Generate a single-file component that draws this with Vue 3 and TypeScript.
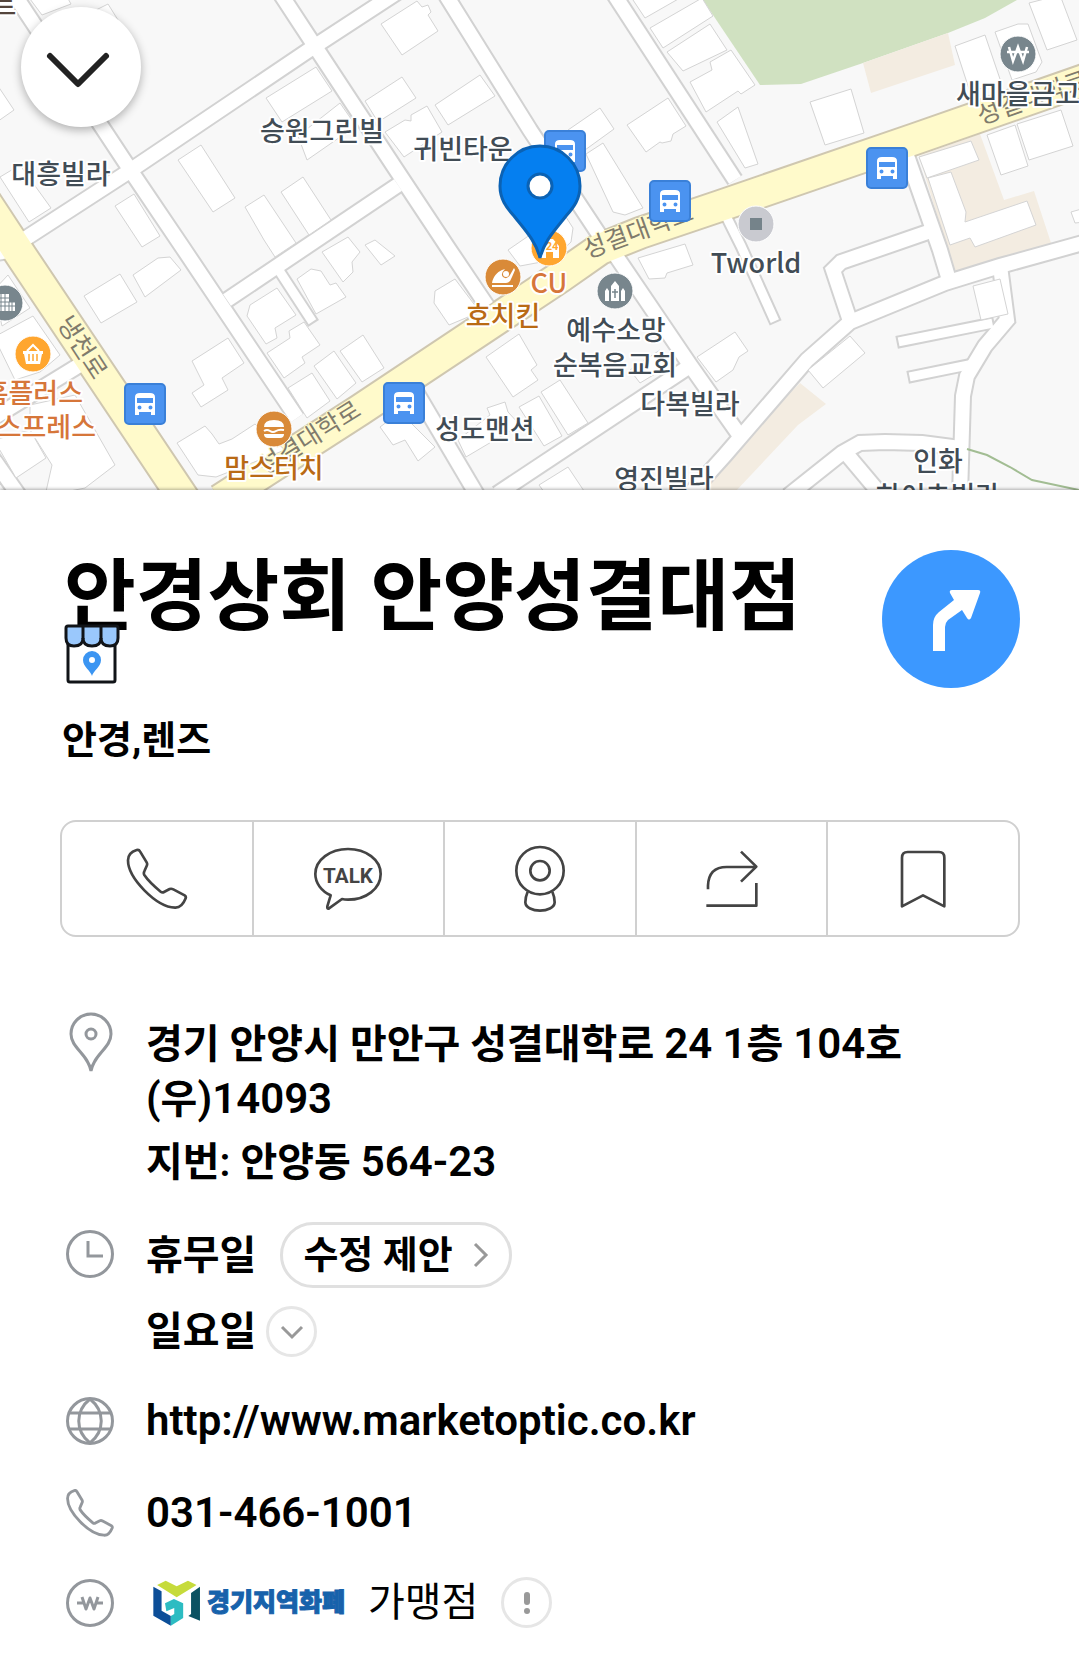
<script setup lang="ts">
interface MapLabel { text: string; x: number; y: number; tone?: string; anchor?: 'start' | 'middle' | 'end' }
interface RoadLabel { text: string; x: number; y: number; angle: number }
interface Poi { x: number; y: number; kind: string; color: string }

// White streets, as centre lines
const roads: string[] = [
  '20,242 125,174 312,48 410,-16',
  '14,-6 100,124 135,177 183,248 297,418',
  '278,-10 320,54 395,168 448,248 487,306',
  '444,-8 530,130 600,236',
  '610,-12 735,180',
  '398,185 227,300',
  '905,150 940,250 949,280',
  '928,232 841,262 833,270 849,318',
  '1090,241 1000,266 945,283 850,322 807,360 725,455 690,494',
  '1000,266 1007,320 985,346 967,376 963,396 960,496',
  '960,448 922,443 885,442 860,443 842,453 788,496',
  '845,452 882,496',
  '497,494 690,366',
  '612,250 690,365 740,436',
  '415,390 480,500',
  '78,366 -10,420',
  '-10,254 14,250',
  '-20,440 22,500',
]
const lanes: string[] = ['722,208 741,246 773,317', '280,272 310,318', '988,324 903,341', '968,365 914,376']
const avenues: string[] = [
  '-30,178 22,257 186,502',
  '220,500 360,410 560,277 600,249 640,233 720,206 915,139 1090,78',
]
const buildings: string[] = [
  '266,98 316,67 332,91 282,122', '298,136 340,103 356,126 307,160', '178,160 201,145 235,198 213,212',
  '245,207 264,195 296,243 275,257 264,240', '281,192 303,177 331,220 309,235', '115,206 134,194 160,236 142,247',
  '0,177 20,165 51,208 29,222', '-6,80 14,110 -6,124', '27,-5 42,15 71,4 66,-5', '96,10 108,4 118,20 105,25',
  '381,24 417,1 422,7 428,5 431,12 428,15 438,31 402,55', '365,101 402,77 416,98 378,122',
  '435,105 480,75 495,96 448,125', '385,132 405,120 411,121 411,115 427,106 442,132 404,157',
  '568,130 600,108 614,129 585,150', '586,154 603,143 643,208 625,215 613,212',
  '627,125 668,98 686,126 673,134 671,141 662,143 660,142 646,152', '629,-6 645,18 687,-6',
  '650,28 702,-2 713,16 663,48', '667,52 710,24 727,50 683,71',
  '690,82 712,70 710,62 731,50 755,85 741,94 738,91 706,112', '717,122 738,107 758,164 745,168',
  '810,102 851,89 864,133 825,145', '955,46 985,35 1001,82 970,92', '995,32 1018,24 1028,24 1042,62 1036,72 1012,80',
  '1029,3 1060,-5 1077,40 1047,50', '987,135 1015,125 1028,166 1001,175', '1017,124 1061,110 1073,146 1029,160',
  '919,157 971,141 979,160 927,178', '928,178 951,172 966,212 965,222 1027,201 1036,225 975,247 970,238 950,245',
  '1071,212 1085,208 1085,222 1075,223', '84,296 120,274 137,302 101,323', '133,275 158,258 170,257 181,270 145,297',
  '192,361 228,338 244,363 222,378 228,390 201,407 192,393 204,385',
  '177,443 205,426 212,434 219,444 232,439 255,424 285,450 216,477 198,475',
  '247,316 250,305 277,288 296,315 275,328 277,338 266,344',
  '267,353 290,338 289,331 304,322 320,345 302,357 305,363 284,378',
  '297,279 311,269 321,271 330,285 336,283 346,297 316,314', '288,388 312,373 330,401 307,418',
  '314,366 334,351 356,383 337,399', '340,351 363,335 384,368 362,382', '322,252 348,237 360,252 352,262 353,272 343,282',
  '-6,337 33,316 60,355 40,372 15,380', '-6,290 8,275 30,308 2,326', '30,405 75,395 115,465 85,488 45,496 52,465 30,430',
  '-6,440 30,430 46,458 16,478', '435,291 455,279 480,312 449,325 434,303',
  '486,357 519,334 537,365 531,370 538,380 513,397', '519,407 539,396 562,436 544,446', '541,392 560,380 588,423 568,435',
  '458,440 490,415 487,408 505,402 508,412 520,425 466,457', '380,427 400,412 435,447 418,461 405,440 393,445',
  '638,258 685,244 693,265 667,273 665,278 649,279', '539,485 568,467 590,500 550,500', '630,370 660,350 670,365 640,383',
  '697,357 735,332 748,351 739,357 733,370 716,382', '808,370 850,336 865,353 823,388',
  '365,245 375,240 395,256 381,265', '508,250 540,228 564,214 573,228 571,242 552,260 520,266',
  '973,286 1000,279 1008,314 981,320',
]
const roadLabels: RoadLabel[] = [
  { text: '냉천로', x: 75, y: 352, angle: 57 },
  { text: '성결대학로', x: 314, y: 445, angle: -32 },
  { text: '성결대학로', x: 641, y: 239, angle: -20 },
  { text: '성결대학로', x: 1035, y: 106, angle: -19 },
]
const buses = [[565, 151], [670, 201], [887, 168], [145, 404], [404, 403]]
const pois: Poi[] = [
  { x: 1018, y: 54, kind: 'won', color: '#78868d' },
  { x: 756, y: 224, kind: 'square', color: '#c9cad0' },
  { x: 615, y: 291, kind: 'church', color: '#78868d' },
  { x: 33, y: 354, kind: 'basket', color: '#ffa62f' },
  { x: 274, y: 429, kind: 'burger', color: '#d98a38' },
  { x: 503, y: 277, kind: 'chicken', color: '#d98a38' },
  { x: 549, y: 248, kind: 'store', color: '#ffa62f' },
  { x: 5, y: 303, kind: 'office', color: '#78868d' },
]
const labels: MapLabel[] = [
  { text: '트', x: 4, y: 15, tone: 'brown' },
  { text: '대흥빌라', x: 61, y: 184 },
  { text: '승원그린빌', x: 322, y: 141 },
  { text: '귀빈타운', x: 463, y: 159 },
  { text: '새마을금고', x: 956, y: 104, anchor: 'start' },
  { text: 'Tworld', x: 756, y: 273 },
  { text: 'CU', x: 549, y: 293, tone: 'orange' },
  { text: '호치킨', x: 503, y: 326, tone: 'amber' },
  { text: '예수소망', x: 616, y: 340 },
  { text: '순복음교회', x: 615, y: 375 },
  { text: '다복빌라', x: 690, y: 414 },
  { text: '성도맨션', x: 485, y: 439 },
  { text: '영진빌라', x: 664, y: 489 },
  { text: '인화', x: 938, y: 471 },
  { text: '하이츠빌라', x: 938, y: 506 },
  { text: '홈플러스', x: 83, y: 403, tone: 'orange', anchor: 'end' },
  { text: '익스프레스', x: 96, y: 437, tone: 'orange', anchor: 'end' },
  { text: '맘스터치', x: 274, y: 478, tone: 'amber' },
]
const phonePath =
  'M297 155Q294 149 287 151C270 156 261 165 261 182C261 235 345 322 402 324C418 325 427 314 434 296Q436 290 431 287L397 269Q391 266 386 268L369 277Q364 280 359 276C342 262 320 241 310 226Q307 221 310 215L317 199Q320 193 317 188Z'
</script>

<template>
  <main class="place">
    <section class="map" aria-label="지도">
      <svg class="map-canvas" viewBox="0 0 1079 490" preserveAspectRatio="xMidYMid slice">
        <polygon class="park" points="703,0 719,24 760,85 801,84 863,63 948,33 985,18 1017,0" />
        <polygon class="lot" points="863,63 948,33 955,65 871,93" />
        <polygon class="lot" points="919,156 980,134 1004,200 1034,191 1052,246 954,271" />
        <polygon class="lot" points="800,383 826,404 798,425 735,492 690,492" />
        <g class="casing">
          <polyline v-for="r in roads" :key="r" :points="r" stroke-width="18" />
          <polyline v-for="r in lanes" :key="r" :points="r" stroke-width="13" stroke-linecap="square" />
        </g>
        <polyline v-for="r in avenues" :key="r" class="avenue-casing" :points="r" />
        <g class="surface">
          <polyline v-for="r in roads" :key="r" :points="r" stroke-width="14" />
          <polyline v-for="r in lanes" :key="r" :points="r" stroke-width="9" stroke-linecap="square" />
        </g>
        <polyline v-for="r in avenues" :key="r" class="avenue" :points="r" />
        <polygon v-for="b in buildings" :key="b" class="building" :points="b" />
        <polyline class="trail" points="967,449 987,455 1010,467 1032,480 1079,490" />

        <text
          v-for="l in roadLabels" :key="`${l.x}`" class="road-label"
          :transform="`translate(${l.x} ${l.y}) rotate(${l.angle})`"
        >{{ l.text }}</text>

        <g v-for="b in buses" :key="`${b[0]}`" :transform="`translate(${b[0]} ${b[1]})`">
          <rect class="bus-sign" x="-20" y="-20" width="40" height="40" rx="4" />
          <path fill="#fff" fill-rule="evenodd" d="M-10 -7Q-10 -11 -5 -11H5Q10 -11 10 -7V11H6V8H-6V11H-10ZM-8 -6V-1H8V-6ZM-7.500 3.500a2 2 0 1 0 4 0a2 2 0 1 0 -4 0ZM3.500 3.500a2 2 0 1 0 4 0a2 2 0 1 0 -4 0Z" />
        </g>

        <g v-for="p in pois" :key="p.kind" :transform="`translate(${p.x} ${p.y})`">
          <circle r="18" :fill="p.color" stroke="#fff" stroke-width="1" />
          <path v-if="p.kind === 'won'" fill="none" stroke="#fff" stroke-width="2.500" d="M-9 -7L-5 7L0 -7L5 7L9 -7M-11 -2H11" />
          <rect v-else-if="p.kind === 'square'" x="-6" y="-6" width="12" height="12" fill="#75838a" />
          <g v-else-if="p.kind === 'church'">
            <path fill="#fff" d="M-10 10V0L-8 -3L-6 0V10ZM6 10V0L8 -3L10 0V10ZM-4 10V-5L0 -10L4 -5V10Z" />
            <path stroke="#78868d" stroke-width="1.500" d="M0 -2V7M-3 1H3" />
          </g>
          <g v-else-if="p.kind === 'basket'">
            <path fill="none" stroke="#fff" stroke-width="2" d="M-6 -3L0 -9L6 -3" />
            <path fill="#fff" d="M-10 -3H10V0H9L7 10H-7L-9 0H-10Z" />
            <path stroke="#ffa62f" stroke-width="1.500" d="M-4 0V7M0 0V7M4 0V7" />
          </g>
          <g v-else-if="p.kind === 'burger'">
            <path fill="#fff" d="M-10 -2Q-10 -9 0 -9Q10 -9 10 -2ZM-10 5H10Q10 9 6 9H-6Q-10 9 -10 5Z" />
            <path fill="none" stroke="#fff" stroke-width="2" d="M-10 2Q-7 0 -4 2T2 2T10 1" />
          </g>
          <g v-else-if="p.kind === 'chicken'">
            <path fill="#fff" d="M-11 6C-10 0 -6 -5 -1 -7L2 -8Q-3 -3 0 0Q4 3 7 -2L11 -9L12 -7L9 0Q7 6 3 6Z" />
            <path stroke="#fff" stroke-width="2" d="M-11 9H10" />
            <circle cx="3" cy="-3" r="3" fill="#fff" />
          </g>
          <g v-else-if="p.kind === 'store'">
            <path fill="#fff" d="M-10 10V-2L-4 -9H4L10 -2V10H4V4H-3V10Z" />
            <text class="store-sign" x="3" y="2">24</text>
          </g>
          <g v-else>
            <path fill="#fff" d="M-8 8V-9H4V-1H10V8Z" />
            <path fill="none" stroke="#78868d" d="M-8 -5H4M-8 -1H10M-8 3H10M-4 -9V8M0 -9V8M4 -1V8M7 -1V8" />
          </g>
        </g>

        <text
          v-for="l in labels" :key="l.text" class="map-label" :class="l.tone"
          :x="l.x" :y="l.y" :text-anchor="l.anchor ?? 'middle'"
        >{{ l.text }}</text>

        <path class="pin" d="M540 258C536 241 524 229 514 216C506 207 500 199 500 186A40 40 0 0 1 580 186C580 199 574 207 566 216C556 229 544 241 540 258Z" />
        <circle class="pin-eye" cx="540" cy="186" r="12" />
      </svg>
      <button class="collapse" type="button" aria-label="접기">
        <svg width="66" height="40" viewBox="0 0 66 40">
          <path d="M5 6L33 34L61 6" fill="none" stroke="#222" stroke-width="6" stroke-linecap="round" stroke-linejoin="round" />
        </svg>
      </button>
    </section>

    <article class="sheet">
      <header class="head">
        <div class="head-text">
          <h1>안경상회 안양성결대점</h1>
          <svg class="shop" viewBox="0 0 56 60">
            <path d="M4 20V56Q4 58 6 58H49Q51 58 51 56V20" fill="#fff" stroke="#111418" stroke-width="3" />
            <path d="M2 4Q2 2 4 2H52Q54 2 54 4V14Q54 22 46 22Q37 22 37 14Q37 22 28 22Q19 22 19 14Q19 22 10 22Q2 22 2 14Z" fill="#9ac8fc" stroke="#111418" stroke-width="3" />
            <path d="M19 2V15M37 2V15" stroke="#111418" stroke-width="3" />
            <path d="M28 52C27 47 19 43 19 36A9 9 0 0 1 37 36C37 43 29 47 28 52ZM25 36a3 3 0 1 0 6 0a3 3 0 1 0 -6 0Z" fill="#3b95f2" fill-rule="evenodd" />
          </svg>
          <p class="category">안경,렌즈</p>
        </div>
        <button class="route" type="button" aria-label="길찾기">
          <svg viewBox="0 0 138 138">
            <path fill="#fff" d="M51 101V75Q51 67 57 62L72 50L68 43Q67 40 70 40H96Q99 40 98 43L89 68Q87 71 85 68L80 60L66 70Q63 73 63 77V101Z" />
          </svg>
        </button>
      </header>

      <nav class="tools" aria-label="장소 메뉴">
        <button type="button" aria-label="전화">
          <svg width="62" height="62" viewBox="255 145 186 186"><path :d="phonePath" /></svg>
        </button>
        <button type="button" aria-label="톡">
          <svg width="70" height="64" viewBox="816 140 210 192">
            <path d="M869 285C841 272 823 248 823 221C823 178 868 146 921 146C975 146 1019 178 1019 221C1019 265 975 298 921 298Q911 298 903 296L863 325Q858 326 859 318Z" />
            <text x="921" y="247">TALK</text>
          </svg>
        </button>
        <button type="button" aria-label="로드뷰">
          <svg width="52" height="68" viewBox="1419 136 156 204">
            <circle cx="1497" cy="213" r="71" /><circle cx="1497" cy="213" r="29" />
            <path d="M1460 276Q1453 292 1453 308C1455 341 1539 341 1541 308Q1541 292 1534 276" />
          </svg>
        </button>
        <button type="button" aria-label="공유">
          <svg width="54" height="58" viewBox="495 151 162 174">
            <path d="M504 269V258Q506 202 560 202H648M603 156L649 201L603 246M499 318H649V250" />
          </svg>
        </button>
        <button type="button" aria-label="저장">
          <svg width="46" height="60" viewBox="1080 148 138 180">
            <path d="M1086 320V174Q1086 157 1103 157H1197Q1213 157 1213 174V320L1149 287Z" />
          </svg>
        </button>
      </nav>

      <section class="info">
        <div class="row address">
          <svg class="icon tall" viewBox="0 0 48 62">
            <path d="M25 59C22 42 5 36 5 22A20 20 0 0 1 45 22C45 36 28 42 25 59Z" /><circle cx="25" cy="22" r="5" />
          </svg>
          <div>
            <p>경기 안양시 만안구 성결대학로 <span class="latin">24 1</span>층 <span class="latin">104</span>호<br><span class="latin">(</span>우<span class="latin">)14093</span></p>
            <p class="lot-number">지번: 안양동 <span class="latin">564-23</span></p>
          </div>
        </div>

        <div class="row hours">
          <svg class="icon" viewBox="0 0 48 48"><circle cx="24" cy="24" r="22.500" /><path d="M22 11V26H37" /></svg>
          <div class="hours-body">
            <div class="line">
              <span>휴무일</span>
              <button class="suggest" type="button">수정 제안
                <svg width="16" height="28" viewBox="0 0 16 28"><path d="M2 3L13 14L2 25" /></svg>
              </button>
            </div>
            <div class="line day">
              <span>일요일</span>
              <button class="round" type="button" aria-label="펼치기">
                <svg width="24" height="16" viewBox="0 0 24 16"><path d="M2 3L12 13L22 3" /></svg>
              </button>
            </div>
          </div>
        </div>

        <div class="row site">
          <svg class="icon" viewBox="0 0 48 48">
            <circle cx="24" cy="24" r="22.500" /><path d="M4 16H44M4 32H44M24 2C9 14 9 34 24 46M24 2C39 14 39 34 24 46" />
          </svg>
          <a class="latin" href="http://www.marketoptic.co.kr">http://www.marketoptic.co.kr</a>
        </div>

        <div class="row tel">
          <svg class="icon phone" viewBox="255 145 186 186"><path :d="phonePath" /></svg>
          <a class="latin" href="tel:031-466-1001">031-466-1001</a>
        </div>

        <div class="row currency">
          <svg class="icon" viewBox="0 0 48 48">
            <circle cx="24" cy="24" r="22.500" /><path class="won" d="M16 18L20 30L24 19L28 30L32 18M11 24H17M31 24H37" />
          </svg>
          <span class="brand">
            <svg width="48" height="46" viewBox="333 598 140 138" preserveAspectRatio="none">
              <path fill="#c6db3b" d="M345 613L370 600L402 617L435 600L460 613L402 650Z" />
              <path fill="#0c4e98" d="M334 618L358 632V690L385 706V735L334 705Z" />
              <path fill="#2cbcc2" d="M368 668L394 655L421 668V712L385 735V706L395 700V682L372 692Z" />
              <path fill="#0b5262" d="M470 618L444 637V700L436 706L470 720Z" />
            </svg>
            <b>경기지역화폐</b>
          </span>
          <span class="member">가맹점</span>
          <button class="round" type="button" aria-label="안내">
            <svg width="8" height="24" viewBox="0 0 8 24"><rect x="1" y="1" width="6" height="13" rx="3" fill="#999" /><circle cx="4" cy="20" r="3" fill="#999" /></svg>
          </button>
        </div>
      </section>
    </article>
  </main>
</template>

<style>
body { margin: 0; background: #fff; }
</style>

<style scoped>
.place { font-family: Roboto, "Noto Sans CJK KR", sans-serif; color: #000; background: #fff; }
.place * { box-sizing: border-box; }
button { margin: 0; padding: 0; border: 0; background: none; font: inherit; color: inherit; cursor: pointer; }
h1, p { margin: 0; }
a { color: inherit; text-decoration: none; }
svg { display: block; flex: none; }

.map { position: relative; height: 490px; overflow: hidden; background: #f8f8f8; }
.map-canvas { width: 100%; height: 100%; }
.park { fill: #d0e1c1; }
.lot { fill: #f3ece1; }
.casing polyline { fill: none; stroke: #d2d2d2; }
.surface polyline { fill: none; stroke: #fff; }
.avenue-casing { fill: none; stroke: #cfc7b0; stroke-width: 34px; }
.avenue { fill: none; stroke: #fffacb; stroke-width: 30px; }
.building { fill: #fff; stroke: #d4d4d4; stroke-width: 1px; }
.trail { fill: none; stroke: #a2bd93; stroke-width: 2px; }
.map-label, .road-label {
  font-family: "Noto Sans CJK KR", sans-serif; font-weight: 500; font-size: 27px;
  paint-order: stroke; stroke: #fff; stroke-width: 4px; stroke-linejoin: round; fill: #414c55;
}
.road-label { font-size: 25px; font-weight: 400; fill: #807b6c; stroke: #fffacb; stroke-width: 2px; text-anchor: middle; }
.map-label.orange { fill: #d6763a; }
.map-label.amber { fill: #b96a14; }
.map-label.brown { fill: #54453c; }
.bus-sign { fill: #4b93f0; stroke: #3a80d8; stroke-width: 2px; }
.store-sign { font: 700 11px Roboto, sans-serif; fill: #ffa62f; text-anchor: middle; }
.pin { fill: #057ff0; stroke: #0b62b4; stroke-width: 3px; }
.pin-eye { fill: #fff; stroke: #0b62b4; stroke-width: 3px; }
.collapse {
  position: absolute; left: 21px; top: 7px; width: 120px; height: 120px; border-radius: 50%;
  background: #fff; box-shadow: 0 3px 10px rgba(0, 0, 0, .3);
  display: flex; align-items: center; justify-content: center; padding: 6px 6px 0 0;
}

.sheet { position: relative; padding: 60px 59px 40px 60px; background: #fff; box-shadow: 0 -1px 3px rgba(0, 0, 0, .3); }
.head { display: flex; justify-content: space-between; align-items: flex-start; }
.head-text { padding-left: 4px; }
h1 { font-size: 78px; line-height: 96px; font-weight: 700; white-space: nowrap; }
.shop { width: 56px; height: 60px; margin-top: -22px; }
.category { margin: 28px 0 0 -2px; font-size: 38px; line-height: 56px; font-weight: 700; }
.route { width: 138px; height: 138px; border-radius: 50%; background: #3c98ff; flex: none; }

.tools { display: flex; margin-top: 52px; height: 117px; border: 2px solid #d0d0d0; border-radius: 16px; }
.tools button { flex: 1; display: flex; align-items: center; justify-content: center; }
.tools button:not(:last-child) { border-right: 2px solid #d0d0d0; }
.tools svg { fill: none; stroke: #444; stroke-width: 8px; stroke-linejoin: round; }
.tools text { font-size: 62px; font-weight: 700; fill: #444; stroke: none; text-anchor: middle; }

.info { padding: 75px 0 0 6px; font-size: 40px; line-height: 55px; font-weight: 600; }
.latin { font-size: 42px; line-height: 48px; }
.row { display: flex; align-items: center; gap: 32px; }
.icon { width: 48px; height: 48px; fill: none; stroke: #93979c; stroke-width: 3px; }
.icon.tall { height: 62px; }
.icon.phone { stroke-width: 11px; }
.icon .won { stroke-linejoin: round; }
.address { align-items: flex-start; }
.address > div { padding-top: 5px; }
.lot-number { margin-top: 8px; }
.hours { align-items: flex-start; margin-top: 32px; }
.hours .icon { margin-top: 8px; }
.line { display: flex; align-items: center; gap: 24px; }
.day { margin-top: 16px; gap: 10px; }
.suggest {
  display: flex; align-items: center; gap: 20px; height: 66px; padding: 0 20px;
  border: 3px solid #e0e0e0; border-radius: 33px; font-size: 38px;
}
.suggest path, .round path { fill: none; stroke: #999; stroke-width: 3px; }
.round {
  display: flex; align-items: center; justify-content: center; flex: none;
  width: 51px; height: 51px; border: 3px solid #e6e6e6; border-radius: 50%;
}
.site { margin-top: 38px; }
.tel { margin-top: 44px; }
.currency { margin-top: 40px; gap: 23px; line-height: 51px; }
.brand { display: flex; align-items: center; gap: 6px; padding-left: 16px; }
.brand b { font-size: 25px; line-height: 36px; font-weight: 900; color: #1762ab; -webkit-text-stroke: 1px #1762ab; }
.member { font-weight: 400; }
</style>
